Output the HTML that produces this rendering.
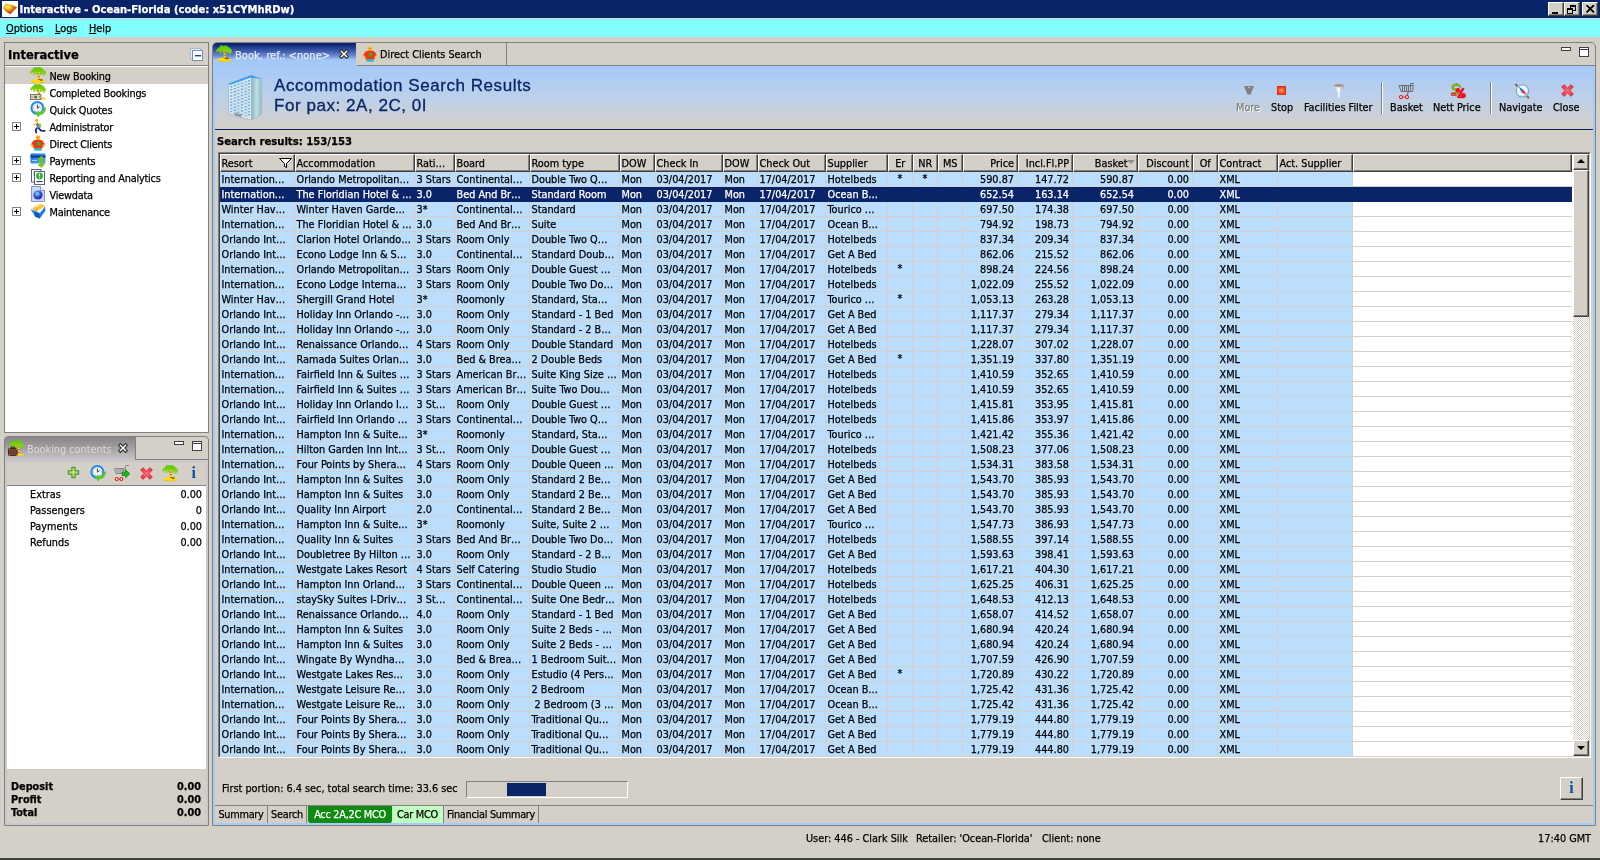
<!DOCTYPE html>
<html><head><meta charset="utf-8"><title>Interactive - Ocean-Florida</title>
<style>
*{box-sizing:border-box;margin:0;padding:0}
html,body{width:1600px;height:860px;overflow:hidden}
body{background:#d4d0c8;font-family:"DejaVu Sans Condensed","Liberation Sans",sans-serif;font-size:10.8px;color:#000;position:relative;-webkit-font-smoothing:none}
.abs{position:absolute}
#all{position:absolute;left:0;top:0;width:1600px;height:860px;will-change:transform;-webkit-text-stroke:.25px}
#title{left:0;top:0;width:1600px;height:18px;background:#0a246a;color:#fff;font-weight:bold;font-size:11.1px;line-height:19px}
#title .t{position:absolute;left:19.5px;top:0;white-space:nowrap}
#menu{left:0;top:18px;width:1600px;height:19px;background:#80ffff;line-height:21px;border-top:1px solid #dcd8d0}
#menu span{position:absolute;top:-1px}
#menu u{text-decoration:underline}
.wbtn{position:absolute;top:2px;width:16px;height:14px;background:#d4d0c8;border:1px solid;border-color:#fff #404040 #404040 #fff;box-shadow:inset -1px -1px 0 #808080}
/* left panels */
.panel{position:absolute;border:1px solid #808080;background:#d4d0c8}
#p1{left:4px;top:42px;width:205px;height:391px}
#p1 .hd{position:absolute;left:0;top:0;width:203px;height:23px;border-bottom:1px solid #808080;font-weight:bold;font-size:12.8px;line-height:23px;padding-left:3px}
#p1 .tree{position:absolute;left:0;top:23px;width:203px;height:366px;background:#fff}
.ti{position:absolute;left:0;width:203px;height:17px;line-height:17px;white-space:nowrap;letter-spacing:-.2px}
.ti span{position:absolute;left:44.5px;top:1px}
.ti svg{position:absolute;left:25px;top:0}
.ti.sel{background:#d4d0c8}
.plus{position:absolute;left:7px;top:4px;width:9px;height:9px;border:1px solid #808080;background:#fff}
.plus:before{content:"";position:absolute;left:1px;top:3px;width:5px;height:1px;background:#000}
.plus:after{content:"";position:absolute;left:3px;top:1px;width:1px;height:5px;background:#000}
#p2{left:4px;top:436px;width:205px;height:390px;border-radius:4px 4px 0 0}
#p2 .tab{position:absolute;left:0;top:0;width:131px;height:23px;background:linear-gradient(#868486,#a3a1a4 50%,#c6c4c6 96%);border-right:1px solid #808080;border-radius:3px 0 0 0;color:#dedad2;line-height:26px;-webkit-text-stroke:0}
#p2 .fr{position:absolute;left:0;top:23px;width:203px;height:365px;border:2px solid #c9c9cd}
#p2 .tl{position:absolute;left:130px;top:22px;width:73px;height:1px;background:#808080}
#p2 .tb{position:absolute;left:2px;top:23px;width:199px;height:26px;border-bottom:1px solid #808080}
#p2 .list{position:absolute;left:2px;top:49px;width:199px;height:283px;background:#fff}
.li{position:absolute;left:0;width:199px;height:16px;line-height:16px}
.li b{position:absolute;left:23px;font-weight:normal}
.li i{position:absolute;right:4px;font-style:normal}
#tot{position:absolute;left:0px;top:343px;width:199px;font-weight:bold}
#tot div{position:relative;height:13px;line-height:13px}
#tot b{position:absolute;left:6px}
#tot i{position:absolute;right:3px;font-style:normal}
.minb{position:absolute;width:10px;height:4px;border:1px solid #404040;background:#fff}
.maxb{position:absolute;width:10px;height:10px;border:1px solid #404040;background:#fff;}
.maxb:after{content:"";position:absolute;left:0;top:1px;width:8px;height:1px;background:#404040}
/* main */
#main{left:212px;top:42px;width:1384px;height:784px;border:1px solid #808080;border-radius:5px 5px 0 0;background:#d4d0c8}
#mtab{position:absolute;left:0;top:0;width:143px;height:23px;background:linear-gradient(#0a246a 4%,#284296 22%,#4664b4 39%,#6e8cd2 57%,#a0c3f5 72%,#a5c9f7 80%);border-radius:4px 0 0 0;color:#e4ecfa;line-height:25px;font-size:11.1px}
#mtab2{position:absolute;left:144px;top:0;width:150px;height:23px;border-right:1px solid #808080;border-bottom:1px solid #808080;line-height:23px}
#mtabline{position:absolute;left:294px;top:22px;width:1088px;height:1px;background:#808080}
#frame{position:absolute;left:0;top:23px;width:1382px;height:759px;border:2px solid #a4ccfa;border-top:0}
#ghead{position:absolute;left:2px;top:23px;width:1378px;height:64px;background:linear-gradient(#a5c9f7,#bbd0ec 45%,#d4d0c8 97%)}
#gline{position:absolute;left:2px;top:86px;width:1378px;height:1px;background:#0a246a}
#ttl{position:absolute;left:61px;top:33px;font-family:"Liberation Sans",sans-serif;font-size:17px;line-height:20px;color:#0a246a;white-space:nowrap;letter-spacing:.55px;-webkit-text-stroke:.3px}
#ttl div{position:absolute;left:0}
#sr{position:absolute;left:4px;top:92px;font-weight:bold;font-size:11.2px;white-space:nowrap;line-height:14px}
.tbi.dis{color:#808080;text-shadow:1px 1px 0 #fff}
.tbi{position:absolute;top:58px;margin-left:-1px;white-space:nowrap;line-height:13px;height:13px;text-align:center}
.tsep{position:absolute;top:39px;width:2px;height:32px;border-left:1px solid #808080;border-right:1px solid #fff}
/* table */
#tbl{position:absolute;left:5px;top:109px;width:1373px;height:606px;border:1px solid;border-color:#808080 #fff #fff #808080;background:#fff}
#tbl2{position:absolute;left:0;top:0;width:1371px;height:604px;border:1px solid;border-color:#404040 #d4d0c8 #d4d0c8 #404040;overflow:hidden}
#tbl .in{position:absolute;left:0;top:0;width:1352px;height:602px;overflow:hidden;
 background:repeating-linear-gradient(#fff 0,#fff 14px,#d4d0c8 14px,#d4d0c8 15px);background-position:0 18px}
.thead{position:absolute;left:0;top:0;height:18px;width:1352px;white-space:nowrap;display:flex;background:#d4d0c8}
.th{height:18px;line-height:17px;border:1px solid;border-color:#fff #404040 #404040 #fff;box-shadow:inset -1px -1px 0 #808080;background:#d4d0c8;padding:0 0 0 .5px;position:relative;overflow:hidden;white-space:nowrap;flex:none}
.th.fill{flex:1}
.th.ar{text-align:right;padding-right:3px}
.th.ac{text-align:center;padding-right:1px}
.flt{position:absolute;right:2px;top:3px}
.sortarr{position:absolute;right:2px;top:5px;border:4px solid transparent;border-top:4px solid #8c8c8c;border-bottom:0}
.tr{position:absolute;left:0;height:15px;width:1352px;display:flex;white-space:nowrap}
.td{height:15px;line-height:15px;background:#bbdefe;border-right:1px solid #d5d1c9;border-bottom:1px solid #d5d1c9;padding:0 0 0 1.5px;overflow:hidden;flex:none}
.td.ar{text-align:right;padding-right:3px}
.td.ac{text-align:center;line-height:13px;padding-right:1.5px}
.tr.sel{background:#0a246a}
.tr.sel .td{background:#0a246a;color:#fff;border-color:#0a246a}
#sb{position:absolute;left:1353px;top:0;width:16px;height:602px;background:#fff;background-image:conic-gradient(#d4d0c8 25%,#fff 0 50%,#d4d0c8 0 75%,#fff 0);background-size:2px 2px}
.sbtn{position:absolute;left:0;width:16px;height:16px;background:#d4d0c8;border:1px solid;border-color:#fff #404040 #404040 #fff;box-shadow:inset -1px -1px 0 #808080}
.sbtn:after{content:"";position:absolute;left:3px;top:4px;border:4px solid transparent}
.sbtn.up:after{border-bottom:4px solid #000;border-top:0;top:4px}
.sbtn.dn:after{border-top:4px solid #000;border-bottom:0;top:5px}
#thumb{position:absolute;left:0;top:16px;width:16px;height:147px;background:#d4d0c8;border:1px solid;border-color:#fff #404040 #404040 #fff;box-shadow:inset -1px -1px 0 #808080}
/* bottom */
#fp{position:absolute;left:9px;top:739px;white-space:nowrap;line-height:14px}
#pb{position:absolute;left:253px;top:738px;width:162px;height:17px;border:1px solid;border-color:#808080 #fff #fff #808080}
#pb i{position:absolute;left:40px;top:1px;width:39px;height:13px;background:#0a246a}
#ib{position:absolute;left:1347px;top:734px;width:23px;height:23px;border:1px solid;border-color:#fff #404040 #404040 #fff;box-shadow:inset -1px -1px 0 #808080;text-align:center;font:bold 16px/20px "Liberation Serif",serif;color:#0a50a0;-webkit-text-stroke:0}
#bline{position:absolute;left:2px;top:762px;width:1378px;height:1px;background:#808080}
.bt{position:absolute;top:763px;height:17px;line-height:17px;border-right:1px solid #808080;text-align:center;white-space:nowrap;letter-spacing:-.25px}
#status{left:0;top:828px;width:1600px;height:22px;line-height:22px}
#status span{position:absolute;white-space:nowrap}
#botline{left:0;top:858px;width:1600px;height:2px;background:#404040}
</style></head><body>
<svg width="0" height="0" style="position:absolute"><defs>
<linearGradient id="gFr" x1="0" y1="0" x2="0" y2="1"><stop offset="0" stop-color="#5cc000"/><stop offset=".55" stop-color="#7ed40c"/><stop offset="1" stop-color="#8ee018"/></linearGradient>
<radialGradient id="gClk" cx=".5" cy=".5" r=".5"><stop offset="0" stop-color="#fff"/><stop offset=".8" stop-color="#e8e8f0"/><stop offset="1" stop-color="#b0b0c0"/></radialGradient>
<linearGradient id="gCard" x1="0" y1="0" x2="1" y2="1"><stop offset="0" stop-color="#1868d0"/><stop offset="1" stop-color="#58b0f8"/></linearGradient>
<radialGradient id="gGlobe" cx=".4" cy=".35" r=".7"><stop offset="0" stop-color="#80c8ff"/><stop offset=".6" stop-color="#2848d0"/><stop offset="1" stop-color="#5018a0"/></radialGradient>
<linearGradient id="gBld" x1="0" y1="0" x2="1" y2="0"><stop offset="0" stop-color="#8fb0b8"/><stop offset=".5" stop-color="#b8e0e8"/><stop offset="1" stop-color="#9ab8c0"/></linearGradient>
<linearGradient id="gFun" x1="0" y1="0" x2="1" y2="0"><stop offset="0" stop-color="#b8b8b8"/><stop offset=".45" stop-color="#ffffff"/><stop offset="1" stop-color="#909090"/></linearGradient>
<radialGradient id="gStop" cx=".5" cy=".5" r=".7"><stop offset="0" stop-color="#ff9060"/><stop offset="1" stop-color="#e82000"/></radialGradient>

<radialGradient id="gX" cx=".5" cy=".5" r=".6"><stop offset="0" stop-color="#ff7078"/><stop offset="1" stop-color="#e83040"/></radialGradient>
<radialGradient id="gFace" cx=".4" cy=".35" r=".7"><stop offset="0" stop-color="#fff"/><stop offset=".7" stop-color="#e4ecf4"/><stop offset="1" stop-color="#70d8f0"/></radialGradient>
<radialGradient id="gPl" cx=".5" cy=".45" r=".6"><stop offset="0" stop-color="#cfe070"/><stop offset="1" stop-color="#8cc850"/></radialGradient>
<symbol id="palm" viewBox="0 0 16 16">
 <ellipse cx="8.2" cy="14.2" rx="7" ry="2" fill="#ffe000"/><path d="M2 15Q8 17.4 14.6 15" stroke="#f0c000" stroke-width="1" fill="none"/>
 <path d="M7.7 4Q8.8 8.5 9 13.4" stroke="#fcd020" stroke-width="2.1" fill="none"/><path d="M7.7 4Q8.8 8.5 9 13.4" stroke="#c86410" stroke-width="2.1" fill="none" stroke-dasharray="1 1.7"/>
 <ellipse cx="11.2" cy="13" rx="1.7" ry=".7" fill="#6a3c08"/>
 <path d="M.3 5.8L1.2 3.8L2.6 2.4L4.2 1.4L4.4 .3L6.6 .2L7.6 1L8.4 .2L10.2 .3L11.6 1.2L13.6 2.4L15 4L16 6L15.6 7L14.4 5.8L14.4 8.2L13.4 8.8L12.8 6.4L11.6 5.6L11.6 7.4L10.4 7.8L9.8 5.6L8.8 4.6L8 5L7.4 7L6.4 6.8L6.4 4.6L5.2 5.2L5 7.6L3.8 7.8L3.6 5L2.4 5L1.2 6.6Z" fill="url(#gFr)" stroke="#70cc10" stroke-width=".5" stroke-linejoin="round"/></symbol>
<symbol id="palmmoney" viewBox="0 0 16 16">
 <path d="M10 14.6h5.6" stroke="#fcd020" stroke-width="2"/>
 <path d="M7.7 4Q8.8 8.5 9.4 13.4" stroke="#fcd020" stroke-width="2.1" fill="none"/><path d="M7.7 4Q8.8 8.5 9.4 13.4" stroke="#c86410" stroke-width="2.1" fill="none" stroke-dasharray="1 1.7"/>
 <path d="M.3 5.8L1.2 3.8L2.6 2.4L4.2 1.4L4.4 .3L6.6 .2L7.6 1L8.4 .2L10.2 .3L11.6 1.2L13.6 2.4L15 4L16 6L15.6 7L14.4 5.8L14.4 8.2L13.4 8.8L12.8 6.4L11.6 5.6L11.6 7.4L10.4 7.8L9.8 5.6L8.8 4.6L8 5L7.4 7L6.4 6.8L6.4 4.6L5.2 5.2L5 7.6L3.8 7.8L3.6 5L2.4 5L1.2 6.6Z" fill="url(#gFr)" stroke="#70cc10" stroke-width=".5" stroke-linejoin="round"/>
 <rect x=".5" y="10.5" width="10.4" height="5" fill="#dcdcc4" stroke="#787860" stroke-width="1"/><circle cx="5.6" cy="13" r="1.6" fill="#686850"/><path d="M2 12v2M9.4 12v2" stroke="#888870" stroke-width=".8"/></symbol>
<symbol id="clock" viewBox="0 0 16 16">
 <circle cx="7.4" cy="7" r="6" fill="url(#gClk)" stroke="#1c8cf4" stroke-width="2"/>
 <g stroke="#888" stroke-width=".7"><path d="M7.4 2.6v1M7.4 10.4v1M3 7h1M10.8 7h1"/></g>
 <path d="M7.4 4V7.2L9.6 5.6" stroke="#303030" stroke-width=".9" fill="none"/>
 <path d="M10.4 13.2Q14.6 11.4 15 6.6" stroke="#5cc828" stroke-width="2.4" fill="none"/>
 <path d="M4.2 9.8L8.2 16L12.2 10.2L10 11.4L8.2 10.4L6.4 11.4Z" fill="#5cc828" stroke="#5cc828" stroke-width=".6" stroke-linejoin="round"/></symbol>
<symbol id="runner" viewBox="0 0 16 16">
 <circle cx="6.6" cy="2.4" r="1.7" fill="#f8b820"/>
 <path d="M7 4.2L10.8 7.6L8.6 10.6L6 7.4Z" fill="#5878b8"/>
 <path d="M8.8 5.8L11.4 8.4L10 10L7.6 8.2Z" fill="#70b838"/>
 <path d="M6.4 5.2L3.4 7.4M9 5.8L11.6 6.2" stroke="#f8b820" stroke-width="1.2" fill="none"/>
 <path d="M8.6 10L11 12.6L15.4 12.8M7.4 9.6L5.6 12L6.4 15.2" stroke="#102090" stroke-width="1.7" fill="none" stroke-linejoin="round"/>
</symbol>
<symbol id="person" viewBox="0 0 16 16">
 <circle cx="8" cy="2.6" r="2.3" fill="#f8c020"/><path d="M6.2 2.4h3.6" stroke="#f89010" stroke-width=".9"/>
 <path d="M3.6 5.4Q8 3.6 12.4 5.4L15.2 9.4L12.8 11.2L12.4 13.4H3.6L3.2 11.2L.8 9.4Z" fill="#f03810"/>
 <path d="M1.2 9.4L3 11.6M14.8 9.4L13 11.6" stroke="#f8c020" stroke-width="1.8"/>
 <rect x="7" y="7" width="3.4" height="3.4" fill="#30b040"/>
 <rect x="4.4" y="13.2" width="7.2" height="2.4" fill="#20b8c8"/>
</symbol>
<symbol id="cardpay" viewBox="0 0 16 16">
 <rect x=".5" y="1.5" width="15" height="10" rx="1" fill="url(#gCard)"/>
 <rect x=".5" y="3.6" width="15" height="2" fill="#0c3c98"/>
 <path d="M2 8.5h5" stroke="#a8d8ff" stroke-width="1"/>
 <path d="M13.6 6.6Q10.2 4.6 9.4 7.4Q9.4 9.2 12 9.8Q14.4 10.6 13.4 12.6Q11.8 14.4 8.4 12.6M11.4 4.2V15.6" stroke="#78c018" stroke-width="1.9" fill="none"/>
</symbol>
<symbol id="report" viewBox="0 0 16 16">
 <rect x="1.5" y=".5" width="9.5" height="12.5" fill="#fff" stroke="#506090" stroke-width="1"/>
 <path d="M3.5 4.5Q5 3 4 7" stroke="#30a030" stroke-width="1.2" fill="none"/>
 <rect x="4.5" y="2.5" width="10" height="13" fill="#fff" stroke="#506090" stroke-width="1"/>
 <circle cx="9.5" cy="7" r="3.4" fill="#28b028"/>
 <path d="M9.5 4.6V7.6M9.5 8.6V9.6" stroke="#fff" stroke-width="1.3"/>
 <path d="M6.4 12.6h6.2" stroke="#402020" stroke-width="1"/>
</symbol>
<symbol id="viewdata" viewBox="0 0 16 16">
 <path d="M1.5 .5H10.5L14.5 4.5V15.5H1.5Z" fill="#c8d8f4" stroke="#8898b8" stroke-width="1"/>
 <path d="M10.5 .5V4.5H14.5" fill="#fff" stroke="#8898b8" stroke-width="1"/>
 <circle cx="8" cy="9" r="4.6" fill="url(#gGlobe)"/>
 <path d="M6 6.4Q8.6 6 9 8Q7.6 9.6 6.4 8.6Z" fill="#78d8c0" opacity=".8"/>
</symbol>
<symbol id="maint" viewBox="0 0 16 16">
 <path d="M.8 6.4L5 13.6L9.8 15.6L15.4 7.8L15 3.4L9.8 10.2L5.2 8Z" fill="#2080e0"/>
 <path d="M5 8.2L9.6 10.4L9.8 15.6L5 13.6Z" fill="#1058b8"/>
 <path d="M2.4 5.4L12 1.2L15 3L6.4 8.4Z" fill="#f8a018"/>
 <path d="M3 4.4L11.6 .8M4 6L13 2M5.2 7.4L14.2 3" stroke="#ffe060" stroke-width=".9"/>
 <path d="M.8 6.4L5.2 8L9.8 10.2" stroke="#60b0ff" stroke-width=".8" fill="none"/>
</symbol>
<symbol id="palmcase" viewBox="0 0 16 16">
 <path d="M9 14.8h6.6" stroke="#fcd020" stroke-width="2"/>
 <path d="M9 4Q10.4 8.5 10.4 13.6" stroke="#fcd020" stroke-width="2" fill="none"/><path d="M9 4Q10.4 8.5 10.4 13.6" stroke="#c86410" stroke-width="2" fill="none" stroke-dasharray="1 1.7"/>
 <path transform="translate(1 0) scale(.94 1)" d="M.3 5.8L1.2 3.8L2.6 2.4L4.2 1.4L4.4 .3L6.6 .2L7.6 1L8.4 .2L10.2 .3L11.6 1.2L13.6 2.4L15 4L16 6L15.6 7L14.4 5.8L14.4 8.2L13.4 8.8L12.8 6.4L11.6 5.6L11.6 7.4L10.4 7.8L9.8 5.6L8.8 4.6L8 5L7.4 7L6.4 6.8L6.4 4.6L5.2 5.2L5 7.6L3.8 7.8L3.6 5L2.4 5L1.2 6.6Z" fill="url(#gFr)" stroke="#70cc10" stroke-width=".5" stroke-linejoin="round"/>
 <rect x=".5" y="8.6" width="8.6" height="7" rx=".8" fill="#6e4434" stroke="#3a2018" stroke-width=".9"/><path d="M3 8.6V7.2h3.6V8.6" stroke="#3c1c04" stroke-width="1" fill="none"/><path d="M1 9.4h.9M8 9.4h.8M1 15h.9M8 15h.8" stroke="#f0c020" stroke-width=".9"/></symbol>
<symbol id="gplus" viewBox="0 0 16 16"><path d="M6.2 2.4H9.8V6.2H13.6V9.8H9.8V13.6H6.2V9.8H2.4V6.2H6.2Z" fill="url(#gPl)" stroke="#3f8f3f" stroke-width="1.1" stroke-linejoin="round"/></symbol>
<symbol id="redx" viewBox="0 0 13 13"><path d="M3 .7L6.5 4.1L10 .7L12.3 3L8.9 6.5L12.3 10L10 12.3L6.5 8.9L3 12.3L.7 10L4.1 6.5L.7 3Z" fill="url(#gX)" stroke="#d82c3c" stroke-width="1" stroke-linejoin="round"/></symbol>
<symbol id="cart" viewBox="0 0 16 16">
 <path d="M1 2.5H15.3L14.6 8.5H3.2Z" fill="none" stroke="#6c6c6c" stroke-width="1"/>
 <path d="M4.5 2.5V8.5M6.5 2.5V8.5M8.5 2.5V8.5M10.5 2.5V8.5M12.5 2.5V8.5" stroke="#6c6c6c" stroke-width="1"/>
 <path d="M16 .5H12.6V2.5" stroke="#6c6c6c" stroke-width="1" fill="none"/>
 <path d="M10.4 8.6L9.2 12" stroke="#6c6c6c" stroke-width="1.1" fill="none"/>
 <path d="M4.4 14h3.4" stroke="#707070" stroke-width="1"/>
 <circle cx="3" cy="14" r="1.5" fill="#f4f8ff" stroke="#f01010" stroke-width="1.2"/><circle cx="9" cy="14" r="1.5" fill="#f4f8ff" stroke="#f01010" stroke-width="1.2"/></symbol>
<symbol id="cartarrow" viewBox="0 0 16 16">
 <path d="M.5 3.5H10L9.4 8.5H2Z" fill="none" stroke="#8a8a8a" stroke-width="1"/>
 <path d="M3.2 3.5V8.5M5 3.5V8.5M6.8 3.5V8.5M8.4 3.5V8.5" stroke="#8a8a8a" stroke-width=".9"/>
 <path d="M15 .5H11.8L10.8 6" stroke="#8a8a8a" stroke-width="1" fill="none"/>
 <path d="M8.2 7.2H11.6V4.8L15.8 8.8L11.6 12.8V10.4H8.2Z" fill="#14c014" stroke="#0c7c0c" stroke-width=".7" stroke-linejoin="round"/>
 <path d="M4.2 14h1.8" stroke="#e81818" stroke-width=".9"/>
 <circle cx="2.8" cy="14" r="1.45" fill="#fff" stroke="#e81818" stroke-width="1.1"/><circle cx="7.4" cy="14" r="1.45" fill="#fff" stroke="#e81818" stroke-width="1.1"/></symbol>
<symbol id="nett" viewBox="0 0 16 16">
 <path d="M10 3.4Q6.2 .2 3 3Q1.6 5.6 5.4 6.6Q8.6 7.6 7.4 10.6" stroke="#86ac28" stroke-width="2.6" fill="none" stroke-linecap="round"/>
 <path d="M6.4 .2V3M.6 10.2Q3 10.6 5 9.4L6.6 13.4" stroke="#7aa420" stroke-width="1.6" fill="none"/>
 <rect x="1.2" y="10" width="4.4" height="2.8" fill="#f01020"/><rect x="2.2" y="11" width="2.2" height=".8" fill="#ffb0b0"/>
 <circle cx="8" cy="7.4" r="2.3" fill="#f01020"/><circle cx="13.4" cy="12.6" r="2.5" fill="#f01020"/>
 <path d="M13.4 5L8 15" stroke="#f01020" stroke-width="2.6"/>
 <path d="M9 14.4h5" stroke="#f01020" stroke-width="1.6"/></symbol>
<symbol id="compass" viewBox="0 0 16 16">
 <path d="M.6 1.6L2 .4L4.4 2.8L3 4.2ZM15.6 14.4L14.2 15.8L11.6 13.2L13 11.8Z" fill="#8a5a20"/>
 <circle cx="8.4" cy="8" r="6.2" fill="url(#gFace)" stroke="#5898d8" stroke-width="1"/>
 <circle cx="8.4" cy="8" r="7" fill="none" stroke="#c0c8d0" stroke-width=".7"/>
 <path d="M4.6 3.6L9.6 7L7.4 9.2Z" fill="#2870e0"/><path d="M12.6 11.8L7.4 9.2L9.6 7Z" fill="#f02020"/></symbol>
<symbol id="funnel" viewBox="0 0 12 15"><ellipse cx="6" cy="2.4" rx="5.6" ry="2.1" fill="#9c9c9c" stroke="#d8d8d8" stroke-width=".8"/>
<path d="M.4 2.8Q6 6 11.6 2.8L7 9.4V14.8H5.2V9.4Z" fill="url(#gFun)"/></symbol>
<symbol id="tabx" viewBox="0 0 10 10"><path d="M.6 2.4L2.4 .6L5 3.2L7.6 .6L9.4 2.4L6.8 5L9.4 7.6L7.6 9.4L5 6.8L2.4 9.4L.6 7.6L3.2 5Z" fill="#fff" stroke="#2c2c2c" stroke-width="1.1" stroke-linejoin="miter"/></symbol>
</defs></svg>

<div id="all">
<div id="title" class="abs">
<svg class="abs" style="left:2px;top:1px" width="16" height="16" viewBox="0 0 16 16"><defs><radialGradient id="gApp" cx=".35" cy=".3" r=".75"><stop offset="0" stop-color="#fff080"/><stop offset=".3" stop-color="#ffc020"/><stop offset=".58" stop-color="#d87010"/><stop offset=".85" stop-color="#b04408"/></radialGradient></defs><rect width="16" height="16" fill="#fff"/><path d="M1.2 7.2L3.6 3L10 4.2L14.8 6.4L8.4 12.9L4 10.4Z" fill="url(#gApp)" stroke="url(#gApp)" stroke-width=".6" stroke-linejoin="round"/></svg>
<span class="t">Interactive - Ocean-Florida (code: x51CYMhRDw)</span>
<div class="wbtn" style="left:1548px"><i class="abs" style="left:3px;top:9px;width:6px;height:2px;background:#000"></i></div>
<div class="wbtn" style="left:1564px"><i class="abs" style="left:5px;top:2px;width:6px;height:6px;border:1px solid #000;border-top-width:2px"></i><i class="abs" style="left:2px;top:5px;width:6px;height:6px;border:1px solid #000;border-top-width:2px;background:#d4d0c8"></i></div>
<div class="wbtn" style="left:1582px"><svg class="abs" style="left:3px;top:2px" width="9" height="8" viewBox="0 0 9 8"><path d="M0.5 0 L8 7.5 M8 0 L0.5 7.5" stroke="#000" stroke-width="1.8"/></svg></div>
</div>
<div id="menu" class="abs"><span style="left:6px"><u>O</u>ptions</span><span style="left:55px"><u>L</u>ogs</span><span style="left:89px"><u>H</u>elp</span></div>

<div id="p1" class="panel">
 <div class="hd">Interactive</div>
 <svg class="abs" style="left:185px;top:5px" width="14" height="14" viewBox="0 0 14 14"><rect x="0.5" y="0.5" width="10" height="10" fill="#e8eef8" stroke="#a8b8d8"/><rect x="2.5" y="2.5" width="10" height="10" fill="#fff" stroke="#7090c8"/><rect x="5" y="7" width="6" height="1.4" fill="#1040a0"/></svg>
 <div class="tree">
  <div class="ti sel" style="top:1px"><svg width="16" height="16"><use href="#palm"/></svg><span>New Booking</span></div>
  <div class="ti" style="top:18px"><svg width="16" height="16"><use href="#palmmoney"/></svg><span>Completed Bookings</span></div>
  <div class="ti" style="top:35px"><svg width="16" height="16"><use href="#clock"/></svg><span>Quick Quotes</span></div>
  <div class="ti" style="top:52px"><i class=plus></i><svg width="16" height="16"><use href="#runner"/></svg><span>Administrator</span></div>
  <div class="ti" style="top:69px"><svg width="16" height="16"><use href="#person"/></svg><span>Direct Clients</span></div>
  <div class="ti" style="top:86px"><i class=plus></i><svg width="16" height="16"><use href="#cardpay"/></svg><span>Payments</span></div>
  <div class="ti" style="top:103px"><i class=plus></i><svg width="16" height="16"><use href="#report"/></svg><span>Reporting and Analytics</span></div>
  <div class="ti" style="top:120px"><svg width="16" height="16"><use href="#viewdata"/></svg><span>Viewdata</span></div>
  <div class="ti" style="top:137px"><i class=plus></i><svg width="16" height="16"><use href="#maint"/></svg><span>Maintenance</span></div>
 </div>
</div>

<div id="p2" class="panel">
 <div class="tab"><svg class="abs" style="left:3px;top:3px" width="16" height="16"><use href="#palmcase"/></svg><span class="abs" style="left:22px">Booking contents</span><svg class="abs" style="left:113px;top:6px" width="10" height="10"><use href="#tabx"/></svg></div>
 <i class="minb" style="left:169px;top:4px"></i><i class="maxb" style="left:187px;top:4px"></i>
 <div class="fr"></div><div class="tl"></div>
 <div class="tb">
  <svg class="abs" style="left:60px;top:6px" width="13" height="13" viewBox="1 1 14 14"><use href="#gplus" x="0" y="0" width="16" height="16"/></svg>
  <svg class="abs" style="left:83px;top:5px" width="16" height="16"><use href="#clock"/></svg>
  <svg class="abs" style="left:107px;top:5px" width="16" height="16"><use href="#cartarrow"/></svg>
  <svg class="abs" style="left:133px;top:7px" width="13" height="13"><use href="#redx"/></svg>
  <svg class="abs" style="left:155px;top:5px" width="16" height="16"><use href="#palm"/></svg>
  <span class="abs" style="left:184.5px;top:3px;font:bold 16px/20px 'Liberation Serif',serif;color:#0850a0;-webkit-text-stroke:0">i</span>
 </div>
 <div class="list">
  <div class="li" style="top:1px"><b>Extras</b><i>0.00</i></div>
  <div class="li" style="top:17px"><b>Passengers</b><i>0</i></div>
  <div class="li" style="top:33px"><b>Payments</b><i>0.00</i></div>
  <div class="li" style="top:49px"><b>Refunds</b><i>0.00</i></div>
 </div>
 <div id="tot"><div><b>Deposit</b><i>0.00</i></div><div><b>Profit</b><i>0.00</i></div><div><b>Total</b><i>0.00</i></div></div>
</div>

<div id="main" class="abs">
 <div id="mtabline"></div>
 <div id="mtab"><svg class="abs" style="left:3px;top:2px" width="16" height="17"><use href="#palm"/></svg><span class="abs" style="left:22px">Book. ref.: &lt;none&gt;</span><svg class="abs" style="left:126px;top:6px" width="10" height="10"><use href="#tabx"/></svg></div>
 <div id="mtab2"><svg class="abs" style="left:5px;top:3px" width="16" height="16"><use href="#person"/></svg><span class="abs" style="left:23px">Direct Clients Search</span></div>
 <i class="minb" style="left:1348px;top:4px"></i><i class="maxb" style="left:1366px;top:4px"></i>
 <div id="frame"></div>
 <div id="ghead"></div>
 <div id="gline"></div>
<svg class="abs" style="left:14px;top:31px" width="36" height="47" viewBox="0 0 36 47">
<path d="M24 1L35 5V40L24 46Z" fill="url(#gBld)"/>
<path d="M1.5 9.5L24 1V46L1.5 40Z" fill="#dfe7ec"/>
<path d="M1.5 9.5L24 1L35 5L24 3.6L3 11Z" fill="#38a0f0"/>
<g stroke="#54b0f2" stroke-width="1.9" stroke-dasharray="1.4 1.7" fill="none"><path d="M4.2 12V39"/><path d="M7.8 10.8V39.8"/><path d="M11.4 9.6V40.6"/><path d="M15 8.4V41.4"/><path d="M18.6 7.2V42.2"/><path d="M22 6V43"/></g>
<g stroke="#c4ced6" stroke-width=".7" fill="none"><path d="M6 11V40"/><path d="M9.6 10V41"/><path d="M13.2 9V42"/><path d="M16.8 8V43"/><path d="M20.4 7V44"/></g>
<path d="M7 38.6L15 40.6L14 43.2L8 41.8Z" fill="#8c98a0"/>
<path d="M1.5 9.5V40L24 46L35 40" fill="none" stroke="#a8b4bc" stroke-width=".8"/>
</svg>
 <div id="ttl"><div style="top:0">Accommodation Search Results</div><div style="top:19.8px">For pax: 2A, 2C, 0I</div></div>
 <div id="sr">Search results: 153/153</div>
 <svg class="abs" style="left:1031px;top:43px" width="10" height="9"><path d="M0 0H10L6.5 8.5H3.5Z" fill="#808080"/><circle cx="5" cy="1.5" r=".8" fill="#e0e0e0"/></svg><div class="tbi dis" style="left:1024px">More</div>
 <svg class="abs" style="left:1064px;top:43px" width="9" height="9"><rect x=".5" y=".5" width="8" height="8" fill="url(#gStop)" stroke="#e03010"/></svg><div class="tbi" style="left:1059px">Stop</div>
 <svg class="abs" style="left:1120px;top:40px" width="12" height="15"><use href="#funnel"/></svg><div class="tbi" style="left:1092px">Facilities Filter</div>
 <div class="tsep" style="left:1168px"></div>
 <svg class="abs" style="left:1185px;top:40px" width="16" height="16"><use href="#cart"/></svg><div class="tbi" style="left:1178px">Basket</div>
 <svg class="abs" style="left:1237px;top:40px" width="16" height="16"><use href="#nett"/></svg><div class="tbi" style="left:1221px">Nett Price</div>
 <div class="tsep" style="left:1277px"></div>
 <svg class="abs" style="left:1301px;top:40px" width="16" height="16"><use href="#compass"/></svg><div class="tbi" style="left:1287px">Navigate</div>
 <svg class="abs" style="left:1348px;top:41px" width="13" height="13"><use href="#redx"/></svg><div class="tbi" style="left:1341px">Close</div>
 <div id="tbl"><div id="tbl2"><div class="in">
<div class="thead">
<div class="th al" style="width:75px"><span>Resort</span><svg class="flt" width="13" height="10" viewBox="0 0 13 10"><path d="M0.5 0.5H12.5L7.5 5.5V9.5L5.5 8.5V5.5Z" fill="#fff" stroke="#000" stroke-width="1"/></svg></div>
<div class="th al" style="width:120px"><span>Accommodation</span></div>
<div class="th al" style="width:40px"><span>Rati…</span></div>
<div class="th al" style="width:75px"><span>Board</span></div>
<div class="th al" style="width:90px"><span>Room type</span></div>
<div class="th al" style="width:35px"><span>DOW</span></div>
<div class="th al" style="width:68px"><span>Check In</span></div>
<div class="th al" style="width:35px"><span>DOW</span></div>
<div class="th al" style="width:68px"><span>Check Out</span></div>
<div class="th al" style="width:62px"><span>Supplier</span></div>
<div class="th ac" style="width:25px"><span>Er</span></div>
<div class="th ac" style="width:25px"><span>NR</span></div>
<div class="th ac" style="width:25px"><span>MS</span></div>
<div class="th ar" style="width:55px"><span>Price</span></div>
<div class="th ar" style="width:55px"><span>Incl.Fl.PP</span></div>
<div class="th ar" style="width:65px;padding-right:9.5px"><span>Basket</span><i class="sortarr"></i></div>
<div class="th ar" style="width:55px"><span>Discount</span></div>
<div class="th ac" style="width:25px"><span>Of</span></div>
<div class="th al" style="width:60px"><span>Contract</span></div>
<div class="th al" style="width:75px"><span>Act. Supplier</span></div>
<div class="th fill"></div></div>
<div class="tr" style="top:18px">
<div class="td al" style="width:75px">Internation…</div>
<div class="td al" style="width:120px">Orlando Metropolitan…</div>
<div class="td al" style="width:40px">3 Stars</div>
<div class="td al" style="width:75px">Continental…</div>
<div class="td al" style="width:90px">Double Two Q…</div>
<div class="td al" style="width:35px">Mon</div>
<div class="td al" style="width:68px">03/04/2017</div>
<div class="td al" style="width:35px">Mon</div>
<div class="td al" style="width:68px">17/04/2017</div>
<div class="td al" style="width:62px">Hotelbeds</div>
<div class="td ac" style="width:25px">*</div>
<div class="td ac" style="width:25px">*</div>
<div class="td ac" style="width:25px"></div>
<div class="td ar" style="width:55px">590.87</div>
<div class="td ar" style="width:55px">147.72</div>
<div class="td ar" style="width:65px">590.87</div>
<div class="td ar" style="width:55px">0.00</div>
<div class="td ac" style="width:25px"></div>
<div class="td al" style="width:60px">XML</div>
<div class="td al" style="width:75px"></div>
</div>
<div class="tr sel" style="top:33px">
<div class="td al" style="width:75px">Internation…</div>
<div class="td al" style="width:120px">The Floridian Hotel &amp; …</div>
<div class="td al" style="width:40px">3.0</div>
<div class="td al" style="width:75px">Bed And Br…</div>
<div class="td al" style="width:90px">Standard Room</div>
<div class="td al" style="width:35px">Mon</div>
<div class="td al" style="width:68px">03/04/2017</div>
<div class="td al" style="width:35px">Mon</div>
<div class="td al" style="width:68px">17/04/2017</div>
<div class="td al" style="width:62px">Ocean B…</div>
<div class="td ac" style="width:25px"></div>
<div class="td ac" style="width:25px"></div>
<div class="td ac" style="width:25px"></div>
<div class="td ar" style="width:55px">652.54</div>
<div class="td ar" style="width:55px">163.14</div>
<div class="td ar" style="width:65px">652.54</div>
<div class="td ar" style="width:55px">0.00</div>
<div class="td ac" style="width:25px"></div>
<div class="td al" style="width:60px">XML</div>
<div class="td al" style="width:75px"></div>
</div>
<div class="tr" style="top:48px">
<div class="td al" style="width:75px">Winter Hav…</div>
<div class="td al" style="width:120px">Winter Haven Garde…</div>
<div class="td al" style="width:40px">3*</div>
<div class="td al" style="width:75px">Continental…</div>
<div class="td al" style="width:90px">Standard</div>
<div class="td al" style="width:35px">Mon</div>
<div class="td al" style="width:68px">03/04/2017</div>
<div class="td al" style="width:35px">Mon</div>
<div class="td al" style="width:68px">17/04/2017</div>
<div class="td al" style="width:62px">Tourico …</div>
<div class="td ac" style="width:25px"></div>
<div class="td ac" style="width:25px"></div>
<div class="td ac" style="width:25px"></div>
<div class="td ar" style="width:55px">697.50</div>
<div class="td ar" style="width:55px">174.38</div>
<div class="td ar" style="width:65px">697.50</div>
<div class="td ar" style="width:55px">0.00</div>
<div class="td ac" style="width:25px"></div>
<div class="td al" style="width:60px">XML</div>
<div class="td al" style="width:75px"></div>
</div>
<div class="tr" style="top:63px">
<div class="td al" style="width:75px">Internation…</div>
<div class="td al" style="width:120px">The Floridian Hotel &amp; …</div>
<div class="td al" style="width:40px">3.0</div>
<div class="td al" style="width:75px">Bed And Br…</div>
<div class="td al" style="width:90px">Suite</div>
<div class="td al" style="width:35px">Mon</div>
<div class="td al" style="width:68px">03/04/2017</div>
<div class="td al" style="width:35px">Mon</div>
<div class="td al" style="width:68px">17/04/2017</div>
<div class="td al" style="width:62px">Ocean B…</div>
<div class="td ac" style="width:25px"></div>
<div class="td ac" style="width:25px"></div>
<div class="td ac" style="width:25px"></div>
<div class="td ar" style="width:55px">794.92</div>
<div class="td ar" style="width:55px">198.73</div>
<div class="td ar" style="width:65px">794.92</div>
<div class="td ar" style="width:55px">0.00</div>
<div class="td ac" style="width:25px"></div>
<div class="td al" style="width:60px">XML</div>
<div class="td al" style="width:75px"></div>
</div>
<div class="tr" style="top:78px">
<div class="td al" style="width:75px">Orlando Int…</div>
<div class="td al" style="width:120px">Clarion Hotel Orlando…</div>
<div class="td al" style="width:40px">3 Stars</div>
<div class="td al" style="width:75px">Room Only</div>
<div class="td al" style="width:90px">Double Two Q…</div>
<div class="td al" style="width:35px">Mon</div>
<div class="td al" style="width:68px">03/04/2017</div>
<div class="td al" style="width:35px">Mon</div>
<div class="td al" style="width:68px">17/04/2017</div>
<div class="td al" style="width:62px">Hotelbeds</div>
<div class="td ac" style="width:25px"></div>
<div class="td ac" style="width:25px"></div>
<div class="td ac" style="width:25px"></div>
<div class="td ar" style="width:55px">837.34</div>
<div class="td ar" style="width:55px">209.34</div>
<div class="td ar" style="width:65px">837.34</div>
<div class="td ar" style="width:55px">0.00</div>
<div class="td ac" style="width:25px"></div>
<div class="td al" style="width:60px">XML</div>
<div class="td al" style="width:75px"></div>
</div>
<div class="tr" style="top:93px">
<div class="td al" style="width:75px">Orlando Int…</div>
<div class="td al" style="width:120px">Econo Lodge Inn &amp; S…</div>
<div class="td al" style="width:40px">3.0</div>
<div class="td al" style="width:75px">Continental…</div>
<div class="td al" style="width:90px">Standard Doub…</div>
<div class="td al" style="width:35px">Mon</div>
<div class="td al" style="width:68px">03/04/2017</div>
<div class="td al" style="width:35px">Mon</div>
<div class="td al" style="width:68px">17/04/2017</div>
<div class="td al" style="width:62px">Get A Bed</div>
<div class="td ac" style="width:25px"></div>
<div class="td ac" style="width:25px"></div>
<div class="td ac" style="width:25px"></div>
<div class="td ar" style="width:55px">862.06</div>
<div class="td ar" style="width:55px">215.52</div>
<div class="td ar" style="width:65px">862.06</div>
<div class="td ar" style="width:55px">0.00</div>
<div class="td ac" style="width:25px"></div>
<div class="td al" style="width:60px">XML</div>
<div class="td al" style="width:75px"></div>
</div>
<div class="tr" style="top:108px">
<div class="td al" style="width:75px">Internation…</div>
<div class="td al" style="width:120px">Orlando Metropolitan…</div>
<div class="td al" style="width:40px">3 Stars</div>
<div class="td al" style="width:75px">Room Only</div>
<div class="td al" style="width:90px">Double Guest …</div>
<div class="td al" style="width:35px">Mon</div>
<div class="td al" style="width:68px">03/04/2017</div>
<div class="td al" style="width:35px">Mon</div>
<div class="td al" style="width:68px">17/04/2017</div>
<div class="td al" style="width:62px">Hotelbeds</div>
<div class="td ac" style="width:25px">*</div>
<div class="td ac" style="width:25px"></div>
<div class="td ac" style="width:25px"></div>
<div class="td ar" style="width:55px">898.24</div>
<div class="td ar" style="width:55px">224.56</div>
<div class="td ar" style="width:65px">898.24</div>
<div class="td ar" style="width:55px">0.00</div>
<div class="td ac" style="width:25px"></div>
<div class="td al" style="width:60px">XML</div>
<div class="td al" style="width:75px"></div>
</div>
<div class="tr" style="top:123px">
<div class="td al" style="width:75px">Internation…</div>
<div class="td al" style="width:120px">Econo Lodge Interna…</div>
<div class="td al" style="width:40px">3 Stars</div>
<div class="td al" style="width:75px">Room Only</div>
<div class="td al" style="width:90px">Double Two Do…</div>
<div class="td al" style="width:35px">Mon</div>
<div class="td al" style="width:68px">03/04/2017</div>
<div class="td al" style="width:35px">Mon</div>
<div class="td al" style="width:68px">17/04/2017</div>
<div class="td al" style="width:62px">Hotelbeds</div>
<div class="td ac" style="width:25px"></div>
<div class="td ac" style="width:25px"></div>
<div class="td ac" style="width:25px"></div>
<div class="td ar" style="width:55px">1,022.09</div>
<div class="td ar" style="width:55px">255.52</div>
<div class="td ar" style="width:65px">1,022.09</div>
<div class="td ar" style="width:55px">0.00</div>
<div class="td ac" style="width:25px"></div>
<div class="td al" style="width:60px">XML</div>
<div class="td al" style="width:75px"></div>
</div>
<div class="tr" style="top:138px">
<div class="td al" style="width:75px">Winter Hav…</div>
<div class="td al" style="width:120px">Shergill Grand Hotel</div>
<div class="td al" style="width:40px">3*</div>
<div class="td al" style="width:75px">Roomonly</div>
<div class="td al" style="width:90px">Standard, Sta…</div>
<div class="td al" style="width:35px">Mon</div>
<div class="td al" style="width:68px">03/04/2017</div>
<div class="td al" style="width:35px">Mon</div>
<div class="td al" style="width:68px">17/04/2017</div>
<div class="td al" style="width:62px">Tourico …</div>
<div class="td ac" style="width:25px">*</div>
<div class="td ac" style="width:25px"></div>
<div class="td ac" style="width:25px"></div>
<div class="td ar" style="width:55px">1,053.13</div>
<div class="td ar" style="width:55px">263.28</div>
<div class="td ar" style="width:65px">1,053.13</div>
<div class="td ar" style="width:55px">0.00</div>
<div class="td ac" style="width:25px"></div>
<div class="td al" style="width:60px">XML</div>
<div class="td al" style="width:75px"></div>
</div>
<div class="tr" style="top:153px">
<div class="td al" style="width:75px">Orlando Int…</div>
<div class="td al" style="width:120px">Holiday Inn Orlando -…</div>
<div class="td al" style="width:40px">3.0</div>
<div class="td al" style="width:75px">Room Only</div>
<div class="td al" style="width:90px">Standard - 1 Bed</div>
<div class="td al" style="width:35px">Mon</div>
<div class="td al" style="width:68px">03/04/2017</div>
<div class="td al" style="width:35px">Mon</div>
<div class="td al" style="width:68px">17/04/2017</div>
<div class="td al" style="width:62px">Get A Bed</div>
<div class="td ac" style="width:25px"></div>
<div class="td ac" style="width:25px"></div>
<div class="td ac" style="width:25px"></div>
<div class="td ar" style="width:55px">1,117.37</div>
<div class="td ar" style="width:55px">279.34</div>
<div class="td ar" style="width:65px">1,117.37</div>
<div class="td ar" style="width:55px">0.00</div>
<div class="td ac" style="width:25px"></div>
<div class="td al" style="width:60px">XML</div>
<div class="td al" style="width:75px"></div>
</div>
<div class="tr" style="top:168px">
<div class="td al" style="width:75px">Orlando Int…</div>
<div class="td al" style="width:120px">Holiday Inn Orlando -…</div>
<div class="td al" style="width:40px">3.0</div>
<div class="td al" style="width:75px">Room Only</div>
<div class="td al" style="width:90px">Standard - 2 B…</div>
<div class="td al" style="width:35px">Mon</div>
<div class="td al" style="width:68px">03/04/2017</div>
<div class="td al" style="width:35px">Mon</div>
<div class="td al" style="width:68px">17/04/2017</div>
<div class="td al" style="width:62px">Get A Bed</div>
<div class="td ac" style="width:25px"></div>
<div class="td ac" style="width:25px"></div>
<div class="td ac" style="width:25px"></div>
<div class="td ar" style="width:55px">1,117.37</div>
<div class="td ar" style="width:55px">279.34</div>
<div class="td ar" style="width:65px">1,117.37</div>
<div class="td ar" style="width:55px">0.00</div>
<div class="td ac" style="width:25px"></div>
<div class="td al" style="width:60px">XML</div>
<div class="td al" style="width:75px"></div>
</div>
<div class="tr" style="top:183px">
<div class="td al" style="width:75px">Orlando Int…</div>
<div class="td al" style="width:120px">Renaissance Orlando…</div>
<div class="td al" style="width:40px">4 Stars</div>
<div class="td al" style="width:75px">Room Only</div>
<div class="td al" style="width:90px">Double Standard</div>
<div class="td al" style="width:35px">Mon</div>
<div class="td al" style="width:68px">03/04/2017</div>
<div class="td al" style="width:35px">Mon</div>
<div class="td al" style="width:68px">17/04/2017</div>
<div class="td al" style="width:62px">Hotelbeds</div>
<div class="td ac" style="width:25px"></div>
<div class="td ac" style="width:25px"></div>
<div class="td ac" style="width:25px"></div>
<div class="td ar" style="width:55px">1,228.07</div>
<div class="td ar" style="width:55px">307.02</div>
<div class="td ar" style="width:65px">1,228.07</div>
<div class="td ar" style="width:55px">0.00</div>
<div class="td ac" style="width:25px"></div>
<div class="td al" style="width:60px">XML</div>
<div class="td al" style="width:75px"></div>
</div>
<div class="tr" style="top:198px">
<div class="td al" style="width:75px">Orlando Int…</div>
<div class="td al" style="width:120px">Ramada Suites Orlan…</div>
<div class="td al" style="width:40px">3.0</div>
<div class="td al" style="width:75px">Bed &amp; Brea…</div>
<div class="td al" style="width:90px">2 Double Beds</div>
<div class="td al" style="width:35px">Mon</div>
<div class="td al" style="width:68px">03/04/2017</div>
<div class="td al" style="width:35px">Mon</div>
<div class="td al" style="width:68px">17/04/2017</div>
<div class="td al" style="width:62px">Get A Bed</div>
<div class="td ac" style="width:25px">*</div>
<div class="td ac" style="width:25px"></div>
<div class="td ac" style="width:25px"></div>
<div class="td ar" style="width:55px">1,351.19</div>
<div class="td ar" style="width:55px">337.80</div>
<div class="td ar" style="width:65px">1,351.19</div>
<div class="td ar" style="width:55px">0.00</div>
<div class="td ac" style="width:25px"></div>
<div class="td al" style="width:60px">XML</div>
<div class="td al" style="width:75px"></div>
</div>
<div class="tr" style="top:213px">
<div class="td al" style="width:75px">Internation…</div>
<div class="td al" style="width:120px">Fairfield Inn &amp; Suites …</div>
<div class="td al" style="width:40px">3 Stars</div>
<div class="td al" style="width:75px">American Br…</div>
<div class="td al" style="width:90px">Suite King Size …</div>
<div class="td al" style="width:35px">Mon</div>
<div class="td al" style="width:68px">03/04/2017</div>
<div class="td al" style="width:35px">Mon</div>
<div class="td al" style="width:68px">17/04/2017</div>
<div class="td al" style="width:62px">Hotelbeds</div>
<div class="td ac" style="width:25px"></div>
<div class="td ac" style="width:25px"></div>
<div class="td ac" style="width:25px"></div>
<div class="td ar" style="width:55px">1,410.59</div>
<div class="td ar" style="width:55px">352.65</div>
<div class="td ar" style="width:65px">1,410.59</div>
<div class="td ar" style="width:55px">0.00</div>
<div class="td ac" style="width:25px"></div>
<div class="td al" style="width:60px">XML</div>
<div class="td al" style="width:75px"></div>
</div>
<div class="tr" style="top:228px">
<div class="td al" style="width:75px">Internation…</div>
<div class="td al" style="width:120px">Fairfield Inn &amp; Suites …</div>
<div class="td al" style="width:40px">3 Stars</div>
<div class="td al" style="width:75px">American Br…</div>
<div class="td al" style="width:90px">Suite Two Dou…</div>
<div class="td al" style="width:35px">Mon</div>
<div class="td al" style="width:68px">03/04/2017</div>
<div class="td al" style="width:35px">Mon</div>
<div class="td al" style="width:68px">17/04/2017</div>
<div class="td al" style="width:62px">Hotelbeds</div>
<div class="td ac" style="width:25px"></div>
<div class="td ac" style="width:25px"></div>
<div class="td ac" style="width:25px"></div>
<div class="td ar" style="width:55px">1,410.59</div>
<div class="td ar" style="width:55px">352.65</div>
<div class="td ar" style="width:65px">1,410.59</div>
<div class="td ar" style="width:55px">0.00</div>
<div class="td ac" style="width:25px"></div>
<div class="td al" style="width:60px">XML</div>
<div class="td al" style="width:75px"></div>
</div>
<div class="tr" style="top:243px">
<div class="td al" style="width:75px">Orlando Int…</div>
<div class="td al" style="width:120px">Holiday Inn Orlando I…</div>
<div class="td al" style="width:40px">3 St…</div>
<div class="td al" style="width:75px">Room Only</div>
<div class="td al" style="width:90px">Double Guest …</div>
<div class="td al" style="width:35px">Mon</div>
<div class="td al" style="width:68px">03/04/2017</div>
<div class="td al" style="width:35px">Mon</div>
<div class="td al" style="width:68px">17/04/2017</div>
<div class="td al" style="width:62px">Hotelbeds</div>
<div class="td ac" style="width:25px"></div>
<div class="td ac" style="width:25px"></div>
<div class="td ac" style="width:25px"></div>
<div class="td ar" style="width:55px">1,415.81</div>
<div class="td ar" style="width:55px">353.95</div>
<div class="td ar" style="width:65px">1,415.81</div>
<div class="td ar" style="width:55px">0.00</div>
<div class="td ac" style="width:25px"></div>
<div class="td al" style="width:60px">XML</div>
<div class="td al" style="width:75px"></div>
</div>
<div class="tr" style="top:258px">
<div class="td al" style="width:75px">Orlando Int…</div>
<div class="td al" style="width:120px">Fairfield Inn Orlando …</div>
<div class="td al" style="width:40px">3 Stars</div>
<div class="td al" style="width:75px">Continental…</div>
<div class="td al" style="width:90px">Double Two Q…</div>
<div class="td al" style="width:35px">Mon</div>
<div class="td al" style="width:68px">03/04/2017</div>
<div class="td al" style="width:35px">Mon</div>
<div class="td al" style="width:68px">17/04/2017</div>
<div class="td al" style="width:62px">Hotelbeds</div>
<div class="td ac" style="width:25px"></div>
<div class="td ac" style="width:25px"></div>
<div class="td ac" style="width:25px"></div>
<div class="td ar" style="width:55px">1,415.86</div>
<div class="td ar" style="width:55px">353.97</div>
<div class="td ar" style="width:65px">1,415.86</div>
<div class="td ar" style="width:55px">0.00</div>
<div class="td ac" style="width:25px"></div>
<div class="td al" style="width:60px">XML</div>
<div class="td al" style="width:75px"></div>
</div>
<div class="tr" style="top:273px">
<div class="td al" style="width:75px">Internation…</div>
<div class="td al" style="width:120px">Hampton Inn &amp; Suite…</div>
<div class="td al" style="width:40px">3*</div>
<div class="td al" style="width:75px">Roomonly</div>
<div class="td al" style="width:90px">Standard, Sta…</div>
<div class="td al" style="width:35px">Mon</div>
<div class="td al" style="width:68px">03/04/2017</div>
<div class="td al" style="width:35px">Mon</div>
<div class="td al" style="width:68px">17/04/2017</div>
<div class="td al" style="width:62px">Tourico …</div>
<div class="td ac" style="width:25px"></div>
<div class="td ac" style="width:25px"></div>
<div class="td ac" style="width:25px"></div>
<div class="td ar" style="width:55px">1,421.42</div>
<div class="td ar" style="width:55px">355.36</div>
<div class="td ar" style="width:65px">1,421.42</div>
<div class="td ar" style="width:55px">0.00</div>
<div class="td ac" style="width:25px"></div>
<div class="td al" style="width:60px">XML</div>
<div class="td al" style="width:75px"></div>
</div>
<div class="tr" style="top:288px">
<div class="td al" style="width:75px">Internation…</div>
<div class="td al" style="width:120px">Hilton Garden Inn Int…</div>
<div class="td al" style="width:40px">3 St…</div>
<div class="td al" style="width:75px">Room Only</div>
<div class="td al" style="width:90px">Double Guest …</div>
<div class="td al" style="width:35px">Mon</div>
<div class="td al" style="width:68px">03/04/2017</div>
<div class="td al" style="width:35px">Mon</div>
<div class="td al" style="width:68px">17/04/2017</div>
<div class="td al" style="width:62px">Hotelbeds</div>
<div class="td ac" style="width:25px"></div>
<div class="td ac" style="width:25px"></div>
<div class="td ac" style="width:25px"></div>
<div class="td ar" style="width:55px">1,508.23</div>
<div class="td ar" style="width:55px">377.06</div>
<div class="td ar" style="width:65px">1,508.23</div>
<div class="td ar" style="width:55px">0.00</div>
<div class="td ac" style="width:25px"></div>
<div class="td al" style="width:60px">XML</div>
<div class="td al" style="width:75px"></div>
</div>
<div class="tr" style="top:303px">
<div class="td al" style="width:75px">Internation…</div>
<div class="td al" style="width:120px">Four Points by Shera…</div>
<div class="td al" style="width:40px">4 Stars</div>
<div class="td al" style="width:75px">Room Only</div>
<div class="td al" style="width:90px">Double Queen …</div>
<div class="td al" style="width:35px">Mon</div>
<div class="td al" style="width:68px">03/04/2017</div>
<div class="td al" style="width:35px">Mon</div>
<div class="td al" style="width:68px">17/04/2017</div>
<div class="td al" style="width:62px">Hotelbeds</div>
<div class="td ac" style="width:25px"></div>
<div class="td ac" style="width:25px"></div>
<div class="td ac" style="width:25px"></div>
<div class="td ar" style="width:55px">1,534.31</div>
<div class="td ar" style="width:55px">383.58</div>
<div class="td ar" style="width:65px">1,534.31</div>
<div class="td ar" style="width:55px">0.00</div>
<div class="td ac" style="width:25px"></div>
<div class="td al" style="width:60px">XML</div>
<div class="td al" style="width:75px"></div>
</div>
<div class="tr" style="top:318px">
<div class="td al" style="width:75px">Orlando Int…</div>
<div class="td al" style="width:120px">Hampton Inn &amp; Suites</div>
<div class="td al" style="width:40px">3.0</div>
<div class="td al" style="width:75px">Room Only</div>
<div class="td al" style="width:90px">Standard 2 Be…</div>
<div class="td al" style="width:35px">Mon</div>
<div class="td al" style="width:68px">03/04/2017</div>
<div class="td al" style="width:35px">Mon</div>
<div class="td al" style="width:68px">17/04/2017</div>
<div class="td al" style="width:62px">Get A Bed</div>
<div class="td ac" style="width:25px"></div>
<div class="td ac" style="width:25px"></div>
<div class="td ac" style="width:25px"></div>
<div class="td ar" style="width:55px">1,543.70</div>
<div class="td ar" style="width:55px">385.93</div>
<div class="td ar" style="width:65px">1,543.70</div>
<div class="td ar" style="width:55px">0.00</div>
<div class="td ac" style="width:25px"></div>
<div class="td al" style="width:60px">XML</div>
<div class="td al" style="width:75px"></div>
</div>
<div class="tr" style="top:333px">
<div class="td al" style="width:75px">Orlando Int…</div>
<div class="td al" style="width:120px">Hampton Inn &amp; Suites</div>
<div class="td al" style="width:40px">3.0</div>
<div class="td al" style="width:75px">Room Only</div>
<div class="td al" style="width:90px">Standard 2 Be…</div>
<div class="td al" style="width:35px">Mon</div>
<div class="td al" style="width:68px">03/04/2017</div>
<div class="td al" style="width:35px">Mon</div>
<div class="td al" style="width:68px">17/04/2017</div>
<div class="td al" style="width:62px">Get A Bed</div>
<div class="td ac" style="width:25px"></div>
<div class="td ac" style="width:25px"></div>
<div class="td ac" style="width:25px"></div>
<div class="td ar" style="width:55px">1,543.70</div>
<div class="td ar" style="width:55px">385.93</div>
<div class="td ar" style="width:65px">1,543.70</div>
<div class="td ar" style="width:55px">0.00</div>
<div class="td ac" style="width:25px"></div>
<div class="td al" style="width:60px">XML</div>
<div class="td al" style="width:75px"></div>
</div>
<div class="tr" style="top:348px">
<div class="td al" style="width:75px">Orlando Int…</div>
<div class="td al" style="width:120px">Quality Inn Airport</div>
<div class="td al" style="width:40px">2.0</div>
<div class="td al" style="width:75px">Continental…</div>
<div class="td al" style="width:90px">Standard 2 Be…</div>
<div class="td al" style="width:35px">Mon</div>
<div class="td al" style="width:68px">03/04/2017</div>
<div class="td al" style="width:35px">Mon</div>
<div class="td al" style="width:68px">17/04/2017</div>
<div class="td al" style="width:62px">Get A Bed</div>
<div class="td ac" style="width:25px"></div>
<div class="td ac" style="width:25px"></div>
<div class="td ac" style="width:25px"></div>
<div class="td ar" style="width:55px">1,543.70</div>
<div class="td ar" style="width:55px">385.93</div>
<div class="td ar" style="width:65px">1,543.70</div>
<div class="td ar" style="width:55px">0.00</div>
<div class="td ac" style="width:25px"></div>
<div class="td al" style="width:60px">XML</div>
<div class="td al" style="width:75px"></div>
</div>
<div class="tr" style="top:363px">
<div class="td al" style="width:75px">Internation…</div>
<div class="td al" style="width:120px">Hampton Inn &amp; Suite…</div>
<div class="td al" style="width:40px">3*</div>
<div class="td al" style="width:75px">Roomonly</div>
<div class="td al" style="width:90px">Suite, Suite 2 …</div>
<div class="td al" style="width:35px">Mon</div>
<div class="td al" style="width:68px">03/04/2017</div>
<div class="td al" style="width:35px">Mon</div>
<div class="td al" style="width:68px">17/04/2017</div>
<div class="td al" style="width:62px">Tourico …</div>
<div class="td ac" style="width:25px"></div>
<div class="td ac" style="width:25px"></div>
<div class="td ac" style="width:25px"></div>
<div class="td ar" style="width:55px">1,547.73</div>
<div class="td ar" style="width:55px">386.93</div>
<div class="td ar" style="width:65px">1,547.73</div>
<div class="td ar" style="width:55px">0.00</div>
<div class="td ac" style="width:25px"></div>
<div class="td al" style="width:60px">XML</div>
<div class="td al" style="width:75px"></div>
</div>
<div class="tr" style="top:378px">
<div class="td al" style="width:75px">Internation…</div>
<div class="td al" style="width:120px">Quality Inn &amp; Suites</div>
<div class="td al" style="width:40px">3 Stars</div>
<div class="td al" style="width:75px">Bed And Br…</div>
<div class="td al" style="width:90px">Double Two Do…</div>
<div class="td al" style="width:35px">Mon</div>
<div class="td al" style="width:68px">03/04/2017</div>
<div class="td al" style="width:35px">Mon</div>
<div class="td al" style="width:68px">17/04/2017</div>
<div class="td al" style="width:62px">Hotelbeds</div>
<div class="td ac" style="width:25px"></div>
<div class="td ac" style="width:25px"></div>
<div class="td ac" style="width:25px"></div>
<div class="td ar" style="width:55px">1,588.55</div>
<div class="td ar" style="width:55px">397.14</div>
<div class="td ar" style="width:65px">1,588.55</div>
<div class="td ar" style="width:55px">0.00</div>
<div class="td ac" style="width:25px"></div>
<div class="td al" style="width:60px">XML</div>
<div class="td al" style="width:75px"></div>
</div>
<div class="tr" style="top:393px">
<div class="td al" style="width:75px">Orlando Int…</div>
<div class="td al" style="width:120px">Doubletree By Hilton …</div>
<div class="td al" style="width:40px">3.0</div>
<div class="td al" style="width:75px">Room Only</div>
<div class="td al" style="width:90px">Standard - 2 B…</div>
<div class="td al" style="width:35px">Mon</div>
<div class="td al" style="width:68px">03/04/2017</div>
<div class="td al" style="width:35px">Mon</div>
<div class="td al" style="width:68px">17/04/2017</div>
<div class="td al" style="width:62px">Get A Bed</div>
<div class="td ac" style="width:25px"></div>
<div class="td ac" style="width:25px"></div>
<div class="td ac" style="width:25px"></div>
<div class="td ar" style="width:55px">1,593.63</div>
<div class="td ar" style="width:55px">398.41</div>
<div class="td ar" style="width:65px">1,593.63</div>
<div class="td ar" style="width:55px">0.00</div>
<div class="td ac" style="width:25px"></div>
<div class="td al" style="width:60px">XML</div>
<div class="td al" style="width:75px"></div>
</div>
<div class="tr" style="top:408px">
<div class="td al" style="width:75px">Internation…</div>
<div class="td al" style="width:120px">Westgate Lakes Resort</div>
<div class="td al" style="width:40px">4 Stars</div>
<div class="td al" style="width:75px">Self Catering</div>
<div class="td al" style="width:90px">Studio Studio</div>
<div class="td al" style="width:35px">Mon</div>
<div class="td al" style="width:68px">03/04/2017</div>
<div class="td al" style="width:35px">Mon</div>
<div class="td al" style="width:68px">17/04/2017</div>
<div class="td al" style="width:62px">Hotelbeds</div>
<div class="td ac" style="width:25px"></div>
<div class="td ac" style="width:25px"></div>
<div class="td ac" style="width:25px"></div>
<div class="td ar" style="width:55px">1,617.21</div>
<div class="td ar" style="width:55px">404.30</div>
<div class="td ar" style="width:65px">1,617.21</div>
<div class="td ar" style="width:55px">0.00</div>
<div class="td ac" style="width:25px"></div>
<div class="td al" style="width:60px">XML</div>
<div class="td al" style="width:75px"></div>
</div>
<div class="tr" style="top:423px">
<div class="td al" style="width:75px">Orlando Int…</div>
<div class="td al" style="width:120px">Hampton Inn Orland…</div>
<div class="td al" style="width:40px">3 Stars</div>
<div class="td al" style="width:75px">Continental…</div>
<div class="td al" style="width:90px">Double Queen …</div>
<div class="td al" style="width:35px">Mon</div>
<div class="td al" style="width:68px">03/04/2017</div>
<div class="td al" style="width:35px">Mon</div>
<div class="td al" style="width:68px">17/04/2017</div>
<div class="td al" style="width:62px">Hotelbeds</div>
<div class="td ac" style="width:25px"></div>
<div class="td ac" style="width:25px"></div>
<div class="td ac" style="width:25px"></div>
<div class="td ar" style="width:55px">1,625.25</div>
<div class="td ar" style="width:55px">406.31</div>
<div class="td ar" style="width:65px">1,625.25</div>
<div class="td ar" style="width:55px">0.00</div>
<div class="td ac" style="width:25px"></div>
<div class="td al" style="width:60px">XML</div>
<div class="td al" style="width:75px"></div>
</div>
<div class="tr" style="top:438px">
<div class="td al" style="width:75px">Internation…</div>
<div class="td al" style="width:120px">staySky Suites I-Driv…</div>
<div class="td al" style="width:40px">3 St…</div>
<div class="td al" style="width:75px">Continental…</div>
<div class="td al" style="width:90px">Suite One Bedr…</div>
<div class="td al" style="width:35px">Mon</div>
<div class="td al" style="width:68px">03/04/2017</div>
<div class="td al" style="width:35px">Mon</div>
<div class="td al" style="width:68px">17/04/2017</div>
<div class="td al" style="width:62px">Hotelbeds</div>
<div class="td ac" style="width:25px"></div>
<div class="td ac" style="width:25px"></div>
<div class="td ac" style="width:25px"></div>
<div class="td ar" style="width:55px">1,648.53</div>
<div class="td ar" style="width:55px">412.13</div>
<div class="td ar" style="width:65px">1,648.53</div>
<div class="td ar" style="width:55px">0.00</div>
<div class="td ac" style="width:25px"></div>
<div class="td al" style="width:60px">XML</div>
<div class="td al" style="width:75px"></div>
</div>
<div class="tr" style="top:453px">
<div class="td al" style="width:75px">Orlando Int…</div>
<div class="td al" style="width:120px">Renaissance Orlando…</div>
<div class="td al" style="width:40px">4.0</div>
<div class="td al" style="width:75px">Room Only</div>
<div class="td al" style="width:90px">Standard - 1 Bed</div>
<div class="td al" style="width:35px">Mon</div>
<div class="td al" style="width:68px">03/04/2017</div>
<div class="td al" style="width:35px">Mon</div>
<div class="td al" style="width:68px">17/04/2017</div>
<div class="td al" style="width:62px">Get A Bed</div>
<div class="td ac" style="width:25px"></div>
<div class="td ac" style="width:25px"></div>
<div class="td ac" style="width:25px"></div>
<div class="td ar" style="width:55px">1,658.07</div>
<div class="td ar" style="width:55px">414.52</div>
<div class="td ar" style="width:65px">1,658.07</div>
<div class="td ar" style="width:55px">0.00</div>
<div class="td ac" style="width:25px"></div>
<div class="td al" style="width:60px">XML</div>
<div class="td al" style="width:75px"></div>
</div>
<div class="tr" style="top:468px">
<div class="td al" style="width:75px">Orlando Int…</div>
<div class="td al" style="width:120px">Hampton Inn &amp; Suites</div>
<div class="td al" style="width:40px">3.0</div>
<div class="td al" style="width:75px">Room Only</div>
<div class="td al" style="width:90px">Suite 2 Beds - …</div>
<div class="td al" style="width:35px">Mon</div>
<div class="td al" style="width:68px">03/04/2017</div>
<div class="td al" style="width:35px">Mon</div>
<div class="td al" style="width:68px">17/04/2017</div>
<div class="td al" style="width:62px">Get A Bed</div>
<div class="td ac" style="width:25px"></div>
<div class="td ac" style="width:25px"></div>
<div class="td ac" style="width:25px"></div>
<div class="td ar" style="width:55px">1,680.94</div>
<div class="td ar" style="width:55px">420.24</div>
<div class="td ar" style="width:65px">1,680.94</div>
<div class="td ar" style="width:55px">0.00</div>
<div class="td ac" style="width:25px"></div>
<div class="td al" style="width:60px">XML</div>
<div class="td al" style="width:75px"></div>
</div>
<div class="tr" style="top:483px">
<div class="td al" style="width:75px">Orlando Int…</div>
<div class="td al" style="width:120px">Hampton Inn &amp; Suites</div>
<div class="td al" style="width:40px">3.0</div>
<div class="td al" style="width:75px">Room Only</div>
<div class="td al" style="width:90px">Suite 2 Beds - …</div>
<div class="td al" style="width:35px">Mon</div>
<div class="td al" style="width:68px">03/04/2017</div>
<div class="td al" style="width:35px">Mon</div>
<div class="td al" style="width:68px">17/04/2017</div>
<div class="td al" style="width:62px">Get A Bed</div>
<div class="td ac" style="width:25px"></div>
<div class="td ac" style="width:25px"></div>
<div class="td ac" style="width:25px"></div>
<div class="td ar" style="width:55px">1,680.94</div>
<div class="td ar" style="width:55px">420.24</div>
<div class="td ar" style="width:65px">1,680.94</div>
<div class="td ar" style="width:55px">0.00</div>
<div class="td ac" style="width:25px"></div>
<div class="td al" style="width:60px">XML</div>
<div class="td al" style="width:75px"></div>
</div>
<div class="tr" style="top:498px">
<div class="td al" style="width:75px">Orlando Int…</div>
<div class="td al" style="width:120px">Wingate By Wyndha…</div>
<div class="td al" style="width:40px">3.0</div>
<div class="td al" style="width:75px">Bed &amp; Brea…</div>
<div class="td al" style="width:90px">1 Bedroom Suit…</div>
<div class="td al" style="width:35px">Mon</div>
<div class="td al" style="width:68px">03/04/2017</div>
<div class="td al" style="width:35px">Mon</div>
<div class="td al" style="width:68px">17/04/2017</div>
<div class="td al" style="width:62px">Get A Bed</div>
<div class="td ac" style="width:25px"></div>
<div class="td ac" style="width:25px"></div>
<div class="td ac" style="width:25px"></div>
<div class="td ar" style="width:55px">1,707.59</div>
<div class="td ar" style="width:55px">426.90</div>
<div class="td ar" style="width:65px">1,707.59</div>
<div class="td ar" style="width:55px">0.00</div>
<div class="td ac" style="width:25px"></div>
<div class="td al" style="width:60px">XML</div>
<div class="td al" style="width:75px"></div>
</div>
<div class="tr" style="top:513px">
<div class="td al" style="width:75px">Orlando Int…</div>
<div class="td al" style="width:120px">Westgate Lakes Res…</div>
<div class="td al" style="width:40px">3.0</div>
<div class="td al" style="width:75px">Room Only</div>
<div class="td al" style="width:90px">Estudio (4 Pers…</div>
<div class="td al" style="width:35px">Mon</div>
<div class="td al" style="width:68px">03/04/2017</div>
<div class="td al" style="width:35px">Mon</div>
<div class="td al" style="width:68px">17/04/2017</div>
<div class="td al" style="width:62px">Get A Bed</div>
<div class="td ac" style="width:25px">*</div>
<div class="td ac" style="width:25px"></div>
<div class="td ac" style="width:25px"></div>
<div class="td ar" style="width:55px">1,720.89</div>
<div class="td ar" style="width:55px">430.22</div>
<div class="td ar" style="width:65px">1,720.89</div>
<div class="td ar" style="width:55px">0.00</div>
<div class="td ac" style="width:25px"></div>
<div class="td al" style="width:60px">XML</div>
<div class="td al" style="width:75px"></div>
</div>
<div class="tr" style="top:528px">
<div class="td al" style="width:75px">Internation…</div>
<div class="td al" style="width:120px">Westgate Leisure Re…</div>
<div class="td al" style="width:40px">3.0</div>
<div class="td al" style="width:75px">Room Only</div>
<div class="td al" style="width:90px">2 Bedroom</div>
<div class="td al" style="width:35px">Mon</div>
<div class="td al" style="width:68px">03/04/2017</div>
<div class="td al" style="width:35px">Mon</div>
<div class="td al" style="width:68px">17/04/2017</div>
<div class="td al" style="width:62px">Ocean B…</div>
<div class="td ac" style="width:25px"></div>
<div class="td ac" style="width:25px"></div>
<div class="td ac" style="width:25px"></div>
<div class="td ar" style="width:55px">1,725.42</div>
<div class="td ar" style="width:55px">431.36</div>
<div class="td ar" style="width:65px">1,725.42</div>
<div class="td ar" style="width:55px">0.00</div>
<div class="td ac" style="width:25px"></div>
<div class="td al" style="width:60px">XML</div>
<div class="td al" style="width:75px"></div>
</div>
<div class="tr" style="top:543px">
<div class="td al" style="width:75px">Internation…</div>
<div class="td al" style="width:120px">Westgate Leisure Re…</div>
<div class="td al" style="width:40px">3.0</div>
<div class="td al" style="width:75px">Room Only</div>
<div class="td al" style="width:90px"> 2 Bedroom (3 …</div>
<div class="td al" style="width:35px">Mon</div>
<div class="td al" style="width:68px">03/04/2017</div>
<div class="td al" style="width:35px">Mon</div>
<div class="td al" style="width:68px">17/04/2017</div>
<div class="td al" style="width:62px">Ocean B…</div>
<div class="td ac" style="width:25px"></div>
<div class="td ac" style="width:25px"></div>
<div class="td ac" style="width:25px"></div>
<div class="td ar" style="width:55px">1,725.42</div>
<div class="td ar" style="width:55px">431.36</div>
<div class="td ar" style="width:65px">1,725.42</div>
<div class="td ar" style="width:55px">0.00</div>
<div class="td ac" style="width:25px"></div>
<div class="td al" style="width:60px">XML</div>
<div class="td al" style="width:75px"></div>
</div>
<div class="tr" style="top:558px">
<div class="td al" style="width:75px">Orlando Int…</div>
<div class="td al" style="width:120px">Four Points By Shera…</div>
<div class="td al" style="width:40px">3.0</div>
<div class="td al" style="width:75px">Room Only</div>
<div class="td al" style="width:90px">Traditional Qu…</div>
<div class="td al" style="width:35px">Mon</div>
<div class="td al" style="width:68px">03/04/2017</div>
<div class="td al" style="width:35px">Mon</div>
<div class="td al" style="width:68px">17/04/2017</div>
<div class="td al" style="width:62px">Get A Bed</div>
<div class="td ac" style="width:25px"></div>
<div class="td ac" style="width:25px"></div>
<div class="td ac" style="width:25px"></div>
<div class="td ar" style="width:55px">1,779.19</div>
<div class="td ar" style="width:55px">444.80</div>
<div class="td ar" style="width:65px">1,779.19</div>
<div class="td ar" style="width:55px">0.00</div>
<div class="td ac" style="width:25px"></div>
<div class="td al" style="width:60px">XML</div>
<div class="td al" style="width:75px"></div>
</div>
<div class="tr" style="top:573px">
<div class="td al" style="width:75px">Orlando Int…</div>
<div class="td al" style="width:120px">Four Points By Shera…</div>
<div class="td al" style="width:40px">3.0</div>
<div class="td al" style="width:75px">Room Only</div>
<div class="td al" style="width:90px">Traditional Qu…</div>
<div class="td al" style="width:35px">Mon</div>
<div class="td al" style="width:68px">03/04/2017</div>
<div class="td al" style="width:35px">Mon</div>
<div class="td al" style="width:68px">17/04/2017</div>
<div class="td al" style="width:62px">Get A Bed</div>
<div class="td ac" style="width:25px"></div>
<div class="td ac" style="width:25px"></div>
<div class="td ac" style="width:25px"></div>
<div class="td ar" style="width:55px">1,779.19</div>
<div class="td ar" style="width:55px">444.80</div>
<div class="td ar" style="width:65px">1,779.19</div>
<div class="td ar" style="width:55px">0.00</div>
<div class="td ac" style="width:25px"></div>
<div class="td al" style="width:60px">XML</div>
<div class="td al" style="width:75px"></div>
</div>
<div class="tr" style="top:588px">
<div class="td al" style="width:75px">Orlando Int…</div>
<div class="td al" style="width:120px">Four Points By Shera…</div>
<div class="td al" style="width:40px">3.0</div>
<div class="td al" style="width:75px">Room Only</div>
<div class="td al" style="width:90px">Traditional Qu…</div>
<div class="td al" style="width:35px">Mon</div>
<div class="td al" style="width:68px">03/04/2017</div>
<div class="td al" style="width:35px">Mon</div>
<div class="td al" style="width:68px">17/04/2017</div>
<div class="td al" style="width:62px">Get A Bed</div>
<div class="td ac" style="width:25px"></div>
<div class="td ac" style="width:25px"></div>
<div class="td ac" style="width:25px"></div>
<div class="td ar" style="width:55px">1,779.19</div>
<div class="td ar" style="width:55px">444.80</div>
<div class="td ar" style="width:65px">1,779.19</div>
<div class="td ar" style="width:55px">0.00</div>
<div class="td ac" style="width:25px"></div>
<div class="td al" style="width:60px">XML</div>
<div class="td al" style="width:75px"></div>
</div>
 </div>
 <div id="sb"><div class="sbtn up" style="top:0"></div><div id="thumb"></div><div class="sbtn dn" style="top:586px"></div></div>
 </div></div>
 <div id="fp">First portion: 6.4 sec, total search time: 33.6 sec</div>
 <div id="pb"><i></i></div>
 <div id="ib">i</div>
 <div id="bline"></div>
 <div class="bt" style="left:2px;width:53px">Summary</div>
 <div class="bt" style="left:55px;width:39px">Search</div>
 <div class="bt" style="left:95px;width:84px;background:#108a10;color:#fff;border-right:0;border-radius:0 0 3px 3px">Acc 2A,2C MCO</div>
 <div class="bt" style="left:179px;width:52px;background:#c0ffc0">Car MCO</div>
 <div class="bt" style="left:231px;width:95px">Financial Summary</div>
</div>

<div id="status" class="abs"><span style="left:806px">User: 446 - Clark Silk</span><span style="left:916px">Retailer: 'Ocean-Florida'</span><span style="left:1042px">Client: none</span><span style="right:9px">17:40 GMT</span></div>
<div id="botline" class="abs"></div>
</div>
</body></html>
